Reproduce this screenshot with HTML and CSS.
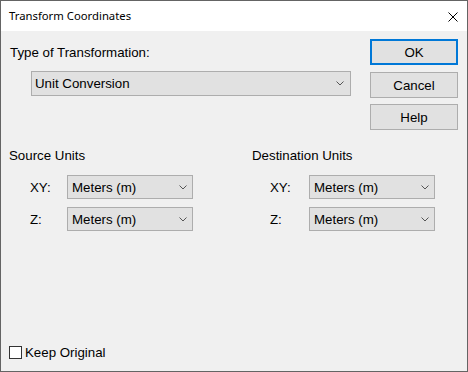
FILE: index.html
```html
<!DOCTYPE html>
<html>
<head>
<meta charset="utf-8">
<link rel="stylesheet" href="styles.css">
</head>
<body>
<div class="window">
  <div class="titlebar">
    <span class="title">Transform Coordinates</span>
    <svg class="close" width="10" height="10" viewBox="0 0 10 10"><path d="M0.5 0.5 L9.5 9.5 M9.5 0.5 L0.5 9.5" stroke="#000" stroke-width="1" fill="none"/></svg>
  </div>
  <div class="body">
    <div class="top">
      <div class="type">
        <div class="type-label">Type of Transformation:</div>
        <div class="combo combo-wide">
          <span class="combo-text">Unit Conversion</span>
          <svg class="chev" width="8" height="5" viewBox="0 0 8 5"><path d="M0.5 0.5 L4 4 L7.5 0.5" stroke="#555" stroke-width="1" fill="none"/></svg>
        </div>
      </div>
      <div class="buttons">
        <div class="btn btn-default">OK</div>
        <div class="btn btn-cancel">Cancel</div>
        <div class="btn btn-help">Help</div>
      </div>
    </div>
    <div class="units">
      <div class="group group-source">
        <div class="heading">Source Units</div>
        <div class="row">
          <span class="row-label">XY:</span>
          <div class="combo combo-small">
            <span class="combo-text">Meters (m)</span>
            <svg class="chev" width="8" height="5" viewBox="0 0 8 5"><path d="M0.5 0.5 L4 4 L7.5 0.5" stroke="#555" stroke-width="1" fill="none"/></svg>
          </div>
        </div>
        <div class="row">
          <span class="row-label">Z:</span>
          <div class="combo combo-small">
            <span class="combo-text">Meters (m)</span>
            <svg class="chev" width="8" height="5" viewBox="0 0 8 5"><path d="M0.5 0.5 L4 4 L7.5 0.5" stroke="#555" stroke-width="1" fill="none"/></svg>
          </div>
        </div>
      </div>
      <div class="group group-dest">
        <div class="heading">Destination Units</div>
        <div class="row">
          <span class="row-label">XY:</span>
          <div class="combo combo-small">
            <span class="combo-text">Meters (m)</span>
            <svg class="chev" width="8" height="5" viewBox="0 0 8 5"><path d="M0.5 0.5 L4 4 L7.5 0.5" stroke="#555" stroke-width="1" fill="none"/></svg>
          </div>
        </div>
        <div class="row">
          <span class="row-label">Z:</span>
          <div class="combo combo-small">
            <span class="combo-text">Meters (m)</span>
            <svg class="chev" width="8" height="5" viewBox="0 0 8 5"><path d="M0.5 0.5 L4 4 L7.5 0.5" stroke="#555" stroke-width="1" fill="none"/></svg>
          </div>
        </div>
      </div>
    </div>
    <div class="check">
      <span class="box"></span>
      <span class="check-text">Keep Original</span>
    </div>
  </div>
</div>
</body>
</html>
```

FILE: styles.css
```css
* { box-sizing: border-box; }
html, body { margin: 0; padding: 0; }
body {
  width: 468px;
  height: 372px;
  font-family: "Liberation Sans", Arial, sans-serif;
  font-size: 13.3px;
  line-height: 15px;
  color: #000;
  background: #fff;
}
.window {
  width: 468px;
  height: 372px;
  border: 1px solid #646464;
  display: flex;
  flex-direction: column;
  background: #f0f0f0;
}
.titlebar {
  height: 30px;
  flex: none;
  background: #fff;
  display: flex;
  align-items: center;
  justify-content: space-between;
  padding: 0 9px 0 8px;
}
.title {
  font-family: "Noto Sans", "Open Sans", sans-serif;
  font-size: 11.3px;
  line-height: 16px;
}
.close { display: block; margin-top: 1px; }
.body {
  flex: 1;
  display: flex;
  flex-direction: column;
  padding: 8px 9px 11px 8px;
}
.top {
  display: flex;
  align-items: flex-start;
}
.type {
  flex: 1;
}
.type-label {
  margin-top: 6px;
  margin-left: 1px;
}
.combo {
  background: #e1e1e1;
  border: 1px solid #adadad;
  display: flex;
  align-items: center;
  justify-content: space-between;
}
.combo-wide {
  width: 320px;
  height: 25px;
  margin-top: 11px;
  margin-left: 22px;
  padding: 0 6px 0 3px;
}
.combo-small {
  width: 126px;
  height: 24px;
  padding: 0 5px 0 4px;
}
.chev { display: block; }
.buttons {
  width: 88px;
  display: flex;
  flex-direction: column;
}
.btn {
  height: 26px;
  background: #e1e1e1;
  border: 1px solid #adadad;
  display: flex;
  align-items: center;
  justify-content: center;
}
.btn-default {
  border: 2px solid #0078d7;
}
.btn-cancel { margin-top: 7px; }
.btn-help { margin-top: 6px; }
.units {
  display: flex;
  margin-top: 18px;
}
.group {
  display: flex;
  flex-direction: column;
}
.group-source { width: 243px; }
.heading { margin-bottom: 12px; }
.row {
  display: flex;
  align-items: center;
  margin-bottom: 8px;
}
.group-source .row { padding-left: 21px; }
.group-source .row-label { width: 37px; }
.group-dest .row { padding-left: 18px; }
.group-dest .row-label { width: 39px; }
.check {
  margin-top: auto;
  display: flex;
  align-items: center;
}
.box {
  width: 13px;
  height: 13px;
  border: 1px solid #333;
  background: #fff;
  margin-right: 3px;
}
```
